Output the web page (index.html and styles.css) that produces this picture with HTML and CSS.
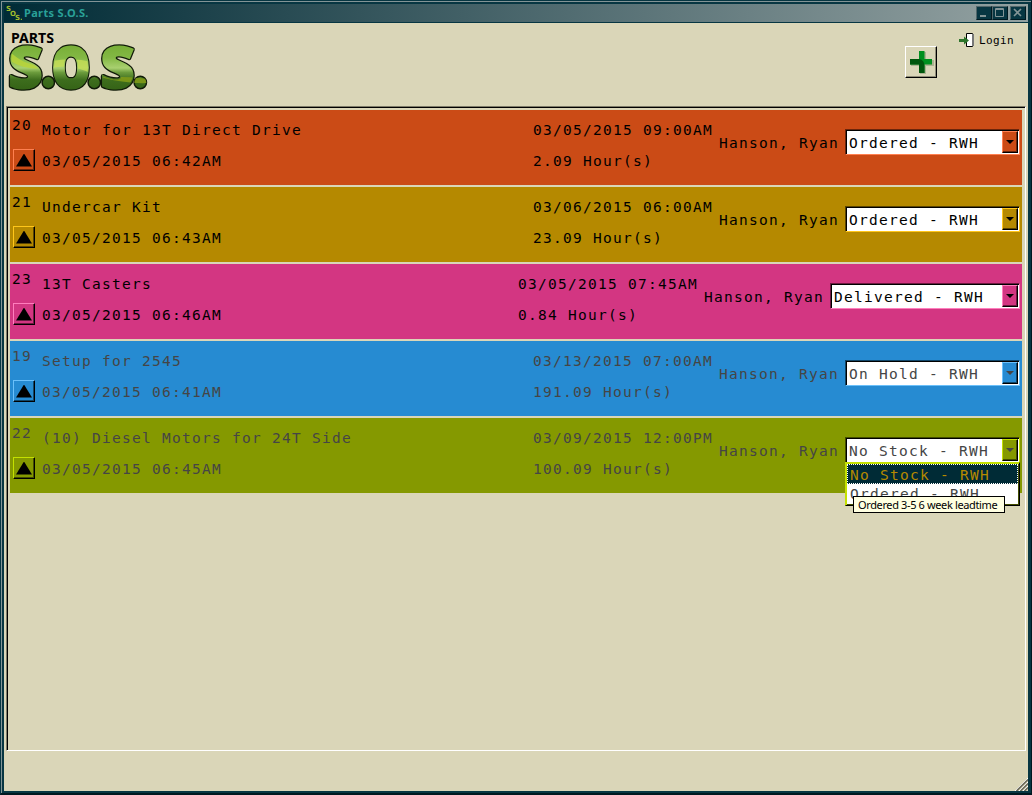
FILE: index.html
```html
<!DOCTYPE html>
<html lang="en">
<head>
<meta charset="utf-8">
<title>Parts S.O.S.</title>
<link rel="stylesheet" href="styles.css">
</head>
<body>
<div class="window">
  <header class="titlebar">
    <svg class="app-icon" width="16" height="16" viewBox="0 0 16 16"><text x="0" y="6">S</text><text x="4" y="11">O</text><text x="9" y="15">S.</text></svg>
    <h1 class="title">Parts S.O.S.</h1>
    <div class="controls">
      <span class="control"><svg width="16" height="14"><path d="M4 10h6" stroke-width="2"/></svg></span>
      <span class="control"><svg width="16" height="14"><path d="M3.500 2.500h8v8h-8zM3 3.500h9"/></svg></span>
      <span class="control close"><svg width="16" height="14"><path d="M4 3l7 7M11 3l-7 7" stroke-width="1.600"/></svg></span>
    </div>
  </header>
  <div class="toolbar">
    <svg class="logo" width="146" height="66" viewBox="0 0 146 66">
      <defs>
        <linearGradient id="green" gradientUnits="userSpaceOnUse" x1="0" y1="14" x2="0" y2="60">
          <stop offset="0" stop-color="#76ad35"/><stop offset=".3" stop-color="#83b844"/>
          <stop offset=".52" stop-color="#a9d070"/><stop offset=".62" stop-color="#6b9b3c"/>
          <stop offset=".78" stop-color="#3d6d1d"/><stop offset="1" stop-color="#356316"/>
        </linearGradient>
        <clipPath id="letters">
          <text class="big" x="0.500" y="57.500" textLength="34" lengthAdjust="spacingAndGlyphs">S</text>
          <text class="big" x="43.500" y="57.500" textLength="39" lengthAdjust="spacingAndGlyphs">O</text>
          <text class="big" x="92.500" y="57.500" textLength="34" lengthAdjust="spacingAndGlyphs">S</text>
          <circle cx="132.300" cy="52.500" r="6"/>
        </clipPath>
        <g id="mark">
          <text class="big" x="0.500" y="57.500" textLength="34" lengthAdjust="spacingAndGlyphs">S</text>
          <text class="big" x="43.500" y="57.500" textLength="39" lengthAdjust="spacingAndGlyphs">O</text>
          <text class="big" x="92.500" y="57.500" textLength="34" lengthAdjust="spacingAndGlyphs">S</text>
        </g>
      </defs>
      <text class="small" x="3" y="13" textLength="43" lengthAdjust="spacingAndGlyphs">PARTS</text>
      <g fill="url(#green)" stroke="#101a08" stroke-width="1.500">
        <circle cx="40.300" cy="52.500" r="6.200"/><circle cx="86.300" cy="52.500" r="6.200"/><circle cx="132.300" cy="52.500" r="6.200"/>
      </g>
      <use href="#mark" fill="#101a08" stroke="#101a08" stroke-width="4.500" stroke-linejoin="round"/>
      <use href="#mark" fill="url(#green)" stroke="url(#green)" stroke-width="2"/>
      <g clip-path="url(#letters)">
        <path d="M0 20C10 30 20 35 36 36L34 38C18 40 8 34 0 30z" fill="#b8d438" opacity=".85"/>
        <path d="M44 31Q65 27 84 32V44Q65 34 44 38z" fill="#c7dd55" opacity=".8"/>
        <path d="M92 47Q118 46 140 49V53Q118 54 92 47z" fill="#849c18" opacity=".85"/>
      </g>
    </svg>
    <div class="actions">
      <button class="add" aria-label="Add">
        <svg width="32" height="32" viewBox="0 0 32 32">
          <path d="M15 6h6v8h8v6h-8v8h-6v-8H6v-6h9z" fill="#8d9b76" opacity=".6"/>
          <path d="M14 5h5.500v8H27v5.500h-7.500V27H14v-8.500H5V13h9z" fill="#00901f"/>
          <path d="M5 13h9q5.500 1 5.500 7v7H14v-8.500H5z" fill="#00560c"/>
        </svg>
      </button>
      <div class="login">
        <svg width="16" height="16" viewBox="0 0 16 16"><path d="M8.500 .5h6v13h-6z" fill="#fff" stroke="#000"/><path d="M14 1h2v12h-2z" fill="#777"/><path d="M1 6h5V3.500l5 4-5 4V9H1z" fill="#2d742c"/></svg>
        <span>Login</span>
      </div>
    </div>
  </div>
  <main class="list">
    <article class="row orange">
      <div class="rank"><span>20</span><button class="up" aria-label="Move up"></button></div>
      <div class="part"><p>Motor for 13T Direct Drive</p><p>03/05/2015 06:42AM</p></div>
      <div class="due"><p>03/05/2015 09:00AM</p><p>2.09 Hour(s)</p></div>
      <p class="owner">Hanson, Ryan</p>
      <div class="combo"><span>Ordered - RWH</span><i class="drop"></i></div>
    </article>
    <article class="row yellow">
      <div class="rank"><span>21</span><button class="up" aria-label="Move up"></button></div>
      <div class="part"><p>Undercar Kit</p><p>03/05/2015 06:43AM</p></div>
      <div class="due"><p>03/06/2015 06:00AM</p><p>23.09 Hour(s)</p></div>
      <p class="owner">Hanson, Ryan</p>
      <div class="combo"><span>Ordered - RWH</span><i class="drop"></i></div>
    </article>
    <article class="row magenta">
      <div class="rank"><span>23</span><button class="up" aria-label="Move up"></button></div>
      <div class="part"><p>13T Casters</p><p>03/05/2015 06:46AM</p></div>
      <div class="due"><p>03/05/2015 07:45AM</p><p>0.84 Hour(s)</p></div>
      <p class="owner">Hanson, Ryan</p>
      <div class="combo wide"><span>Delivered - RWH</span><i class="drop"></i></div>
    </article>
    <article class="row blue muted">
      <div class="rank"><span>19</span><button class="up" aria-label="Move up"></button></div>
      <div class="part"><p>Setup for 2545</p><p>03/05/2015 06:41AM</p></div>
      <div class="due"><p>03/13/2015 07:00AM</p><p>191.09 Hour(s)</p></div>
      <p class="owner">Hanson, Ryan</p>
      <div class="combo"><span>On Hold - RWH</span><i class="drop"></i></div>
    </article>
    <article class="row green muted">
      <div class="rank"><span>22</span><button class="up" aria-label="Move up"></button></div>
      <div class="part"><p>(10) Diesel Motors for 24T Side</p><p>03/05/2015 06:45AM</p></div>
      <div class="due"><p>03/09/2015 12:00PM</p><p>100.09 Hour(s)</p></div>
      <p class="owner">Hanson, Ryan</p>
      <div class="combo"><span>No Stock - RWH</span><i class="drop"></i>
        <div class="menu"><div class="option selected">No Stock - RWH</div><div class="option">Ordered - RWH</div></div>
        <div class="tooltip">Ordered 3-5 6 week leadtime</div>
      </div>
    </article>
  </main>
  <svg class="grip" width="14" height="14" viewBox="0 0 14 14"><path d="M1 14L14 1M5 14l9-9M9 14l5-5" stroke="#fff"/><path d="M2.500 14L14 2.500M6.500 14L14 6.500M10.500 14l3.500-3.500" stroke="#6c6b5c" stroke-width="1.700"/></svg>
</div>
</body>
</html>
```
FILE: styles.css
```css
* { box-sizing: border-box; }
body { margin: 0; background: #073642; }
p, h1 { margin: 0; }
button { padding: 0; border-radius: 0; }
svg { display: block; fill: none; }

.window {
  position: relative;
  width: 1032px;
  height: 795px;
  padding: 3px;
  background: #dad6b8;
  border: 1px solid #073642;
  border-bottom: 2px solid #001920;
  border-right-color: #001920;
  box-shadow: inset 1px 1px #839496, inset 3px 3px #073642, inset -3px -2px #073642;
}
.titlebar {
  display: flex;
  align-items: center;
  height: 19px;
  padding: 0 2px 0 2px;
  background: linear-gradient(90deg, #002b36, #93a1a1);
  border-bottom: 1px solid #073642;
}
.app-icon text { font: bold 7px "DejaVu Sans", sans-serif; fill: #a3bd2d; }
.title { flex: 1; margin-left: 2px; font: bold 11px/16px "Noto Sans", sans-serif; letter-spacing: .35px; color: #2aa198; }
.controls { display: flex; }
.control { width: 16px; height: 14px; background: #073642; border: 1px solid #52676b; border-right-color: #001920; border-bottom-color: #001920; }
.control svg { margin: -1px; stroke: #839496; }
.close { margin-left: 2px; }

.toolbar { display: flex; justify-content: space-between; height: 83px; padding: 7px 14px 0 4px; }
.logo { overflow: visible; }
.logo .small { font: bold 14px "Noto Sans", sans-serif; fill: #000; }
.logo .big { font: 800 57px "Open Sans", "Noto Sans", sans-serif; }
.actions { display: flex; gap: 21px; }
.add { width: 32px; height: 32px; margin-top: 16px; background: #dad6b8; border: 1px solid; border-color: #fff #000 #000 #fff; box-shadow: inset -1px -1px #8f8d78; }
.add svg { margin: -1px; }
.login { display: flex; gap: 5px; margin-top: 3px; height: 16px; font: 11px/16px "DejaVu Sans Mono", monospace; letter-spacing: .38px; }

.list {
  display: flex;
  flex-direction: column;
  gap: 2px;
  width: 1020px;
  height: 645px;
  margin-left: 2px;
  padding: 3px;
  border: 1px solid;
  border-color: #7d7b68 #fff #fff #7d7b68;
  box-shadow: inset 1px 1px #000;
  font: 14.500px/20px "DejaVu Sans Mono", monospace;
  letter-spacing: 1.270px;
  white-space: nowrap;
}
.row { display: flex; height: 75px; flex: none; width: 1012px; padding-right: 2px; background: var(--base); color: #000; }
.orange { --base: #cb4b16; --light: #ff8050; --dark: #6c250b; }
.yellow { --base: #b58900; --light: #ffc61a; --dark: #5b4500; }
.magenta { --base: #d33682; --light: #ff7dbd; --dark: #6d1940; }
.blue { --base: #268bd2; --light: #6bc0fa; --dark: #104669; }
.green { --base: #859900; --light: #c4e000; --dark: #434d00; }
.muted { color: #454545; }
.rank { display: flex; flex-direction: column; width: 32px; padding: 5px 0 0 2px; }
.up { display: grid; place-items: center; width: 22px; height: 22px; margin: 14px 0 0 1px; background: var(--base); border: 1px solid; border-color: var(--light) #000 #000 var(--light); box-shadow: inset -1px -1px var(--dark); }
.up::before { content: ""; width: 16px; height: 13px; background: #000; clip-path: polygon(50% 0, 100% 100%, 0 100%); }
.part, .due { display: grid; grid-template-rows: 20px 20px; row-gap: 11px; padding-top: 10px; align-content: start; }
.part { flex: 1; }
.due { width: 186px; }
.owner { width: 126px; padding-top: 23px; }
.combo { position: relative; display: flex; width: 175px; height: 26px; margin-top: 19px; background: #fff; border: 1px solid; border-color: var(--dark) var(--light) var(--light) var(--dark); box-shadow: inset 1px 1px #000; }
.combo.wide { width: 190px; }
.combo span { flex: 1; padding: 3px 0 0 3px; }
.drop { display: grid; place-items: center; width: 16px; height: 22px; margin: 1px 1px 0 0; background: var(--base); border: 1px solid; border-color: var(--light) #000 #000 var(--light); box-shadow: inset -1px -1px var(--dark); }
.drop::before { content: ""; width: 8px; height: 4px; background: currentColor; clip-path: polygon(0 0, 100% 0, 50% 100%); }
.menu { position: absolute; z-index: 1; left: -1px; top: 24px; width: 175px; height: 44px; overflow: hidden; background: #fff; border: 1px solid; border-color: var(--light) #000 #000 var(--light); box-shadow: inset 1px 1px var(--light), inset -1px -1px var(--dark); padding: 1px; }
.option { height: 20px; padding-left: 3px; line-height: 21px; }
.option.selected { background: #002b36; color: #b58900; border: 1px dotted #fff; padding-left: 2px; }
.tooltip { position: absolute; z-index: 2; left: 7px; top: 58px; width: 152px; height: 17px; padding-left: 4px; background: #ffffe1; border: 1px solid #000; color: #000; font: 11px/15px "Noto Sans", sans-serif; letter-spacing: -.37px; }
.grip { position: absolute; right: 3px; bottom: 2px; }
```
